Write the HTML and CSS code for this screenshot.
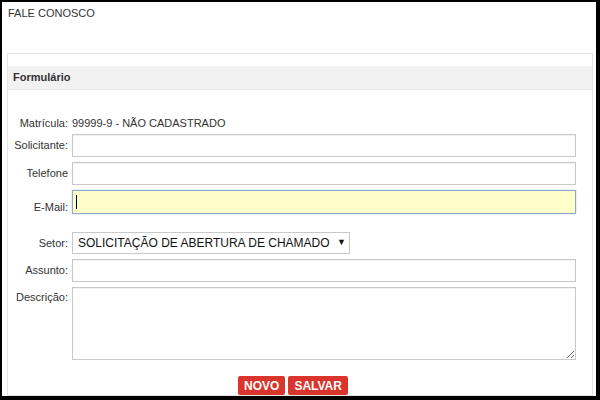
FILE: index.html
```html
<!DOCTYPE html>
<html lang="pt-BR">
<head>
  <meta charset="UTF-8" />
  <meta name="viewport" content="width=device-width, initial-scale=1.0"/>
  <title>Fale Conosco</title>
  <link rel="stylesheet" href="styles.css">
</head>
<body>
  <div class="window">
    <div class="top">FALE CONOSCO</div>

    <div class="panel">
      <div class="panel-heading">Formulário</div>

      <div class="panel-body">
        <div class="form-grid">
          <label class="lbl lbl-line">Matrícula:</label>
          <div class="value">99999-9 - NÃO CADASTRADO</div>

          <label class="lbl" for="solicitante">Solicitante:</label>
          <input class="field" type="text" id="solicitante" />

          <label class="lbl" for="telefone">Telefone</label>
          <input class="field" type="text" id="telefone" />

          <label class="lbl lbl-low" for="email">E-Mail:</label>
          <div class="caret-wrap">
            <input class="field field-focus" type="text" id="email" />
          </div>

          <label class="lbl gap-top" for="setor">Setor:</label>
          <div class="select-box gap-top">
            <select id="setor">
              <option>SOLICITAÇÃO DE ABERTURA DE CHAMADO</option>
            </select>
            <span class="arrow">&#9660;</span>
          </div>

          <label class="lbl" for="assunto">Assunto:</label>
          <input class="field" type="text" id="assunto" />

          <label class="lbl lbl-top" for="descricao">Descrição:</label>
          <textarea class="field area" id="descricao"></textarea>
        </div>

        <div class="actions">
          <button class="btn">NOVO</button>
          <button class="btn">SALVAR</button>
        </div>
      </div>
    </div>
  </div>
</body>
</html>
```

FILE: styles.css
```css
* {
  box-sizing: border-box;
}

body {
  margin: 0;
  background: #000;
  font-family: "Liberation Sans", Arial, sans-serif;
  font-size: 11px;
  color: #333;
}

.window {
  display: flex;
  flex-direction: column;
  height: 394px;
  margin: 2px 4px 4px 2px;
  background: #fff;
  overflow: hidden;
}

.top {
  height: 53px;
  padding: 5px 6px 0;
  line-height: 13px;
}

.panel {
  flex: 1;
  margin: 0 3px 0 5px;
  padding-top: 12px;
  border: 1px solid #e4e4e4;
}

.panel-heading {
  height: 24px;
  padding-left: 5px;
  background: #f2f2f2;
  border-bottom: 1px solid #e6e6e6;
  font-weight: bold;
  line-height: 23px;
  color: #333;
}

.panel-body {
  padding: 27px 16px 0 0;
}

.form-grid {
  display: grid;
  grid-template-columns: 60px 1fr;
  column-gap: 4px;
  row-gap: 5px;
  align-items: center;
}

.lbl {
  text-align: right;
  white-space: nowrap;
  line-height: 13px;
}

.lbl-line,
.value {
  line-height: 12px;
}

.lbl-low {
  align-self: end;
}

.lbl-top {
  align-self: start;
  padding-top: 4px;
}

.gap-top {
  margin-top: 13px;
}

.field {
  display: block;
  width: 100%;
  height: 23px;
  padding: 2px 4px;
  border: 1px solid #c9c9c9;
  border-radius: 0;
  background: #fff;
  box-shadow: inset 0 1px 1px rgba(0, 0, 0, 0.06);
  font-family: inherit;
  font-size: 12px;
}

.field-focus {
  height: 24px;
  background: #ffffcc;
  border-color: #8ea9c3;
  box-shadow: 0 0 2px #b5d3ef;
  outline: none;
}

.caret-wrap {
  position: relative;
}

.caret-wrap::after {
  content: "";
  position: absolute;
  left: 4px;
  top: 5px;
  width: 1px;
  height: 14px;
  background: #000;
}

.area {
  height: 73px;
  resize: both;
}

.select-box {
  position: relative;
  width: 278px;
}

.select-box select {
  display: block;
  width: 100%;
  height: 22px;
  padding: 0 0 0 5px;
  border: 1px solid #c9c9c9;
  border-radius: 0;
  background: #fff;
  appearance: none;
  -webkit-appearance: none;
  font-family: inherit;
  font-size: 12px;
  color: #111;
}

.select-box .arrow {
  position: absolute;
  right: 4px;
  top: 5px;
  font-size: 9px;
  color: #111;
}

.actions {
  display: flex;
  justify-content: center;
  gap: 3px;
  margin-top: 16px;
  padding-left: 2px;
}

.btn {
  height: 19px;
  padding: 0 6px;
  border: none;
  border-radius: 2px;
  background: #d9352c;
  color: #fff;
  font-family: inherit;
  font-size: 12px;
  font-weight: bold;
  cursor: pointer;
}
```
